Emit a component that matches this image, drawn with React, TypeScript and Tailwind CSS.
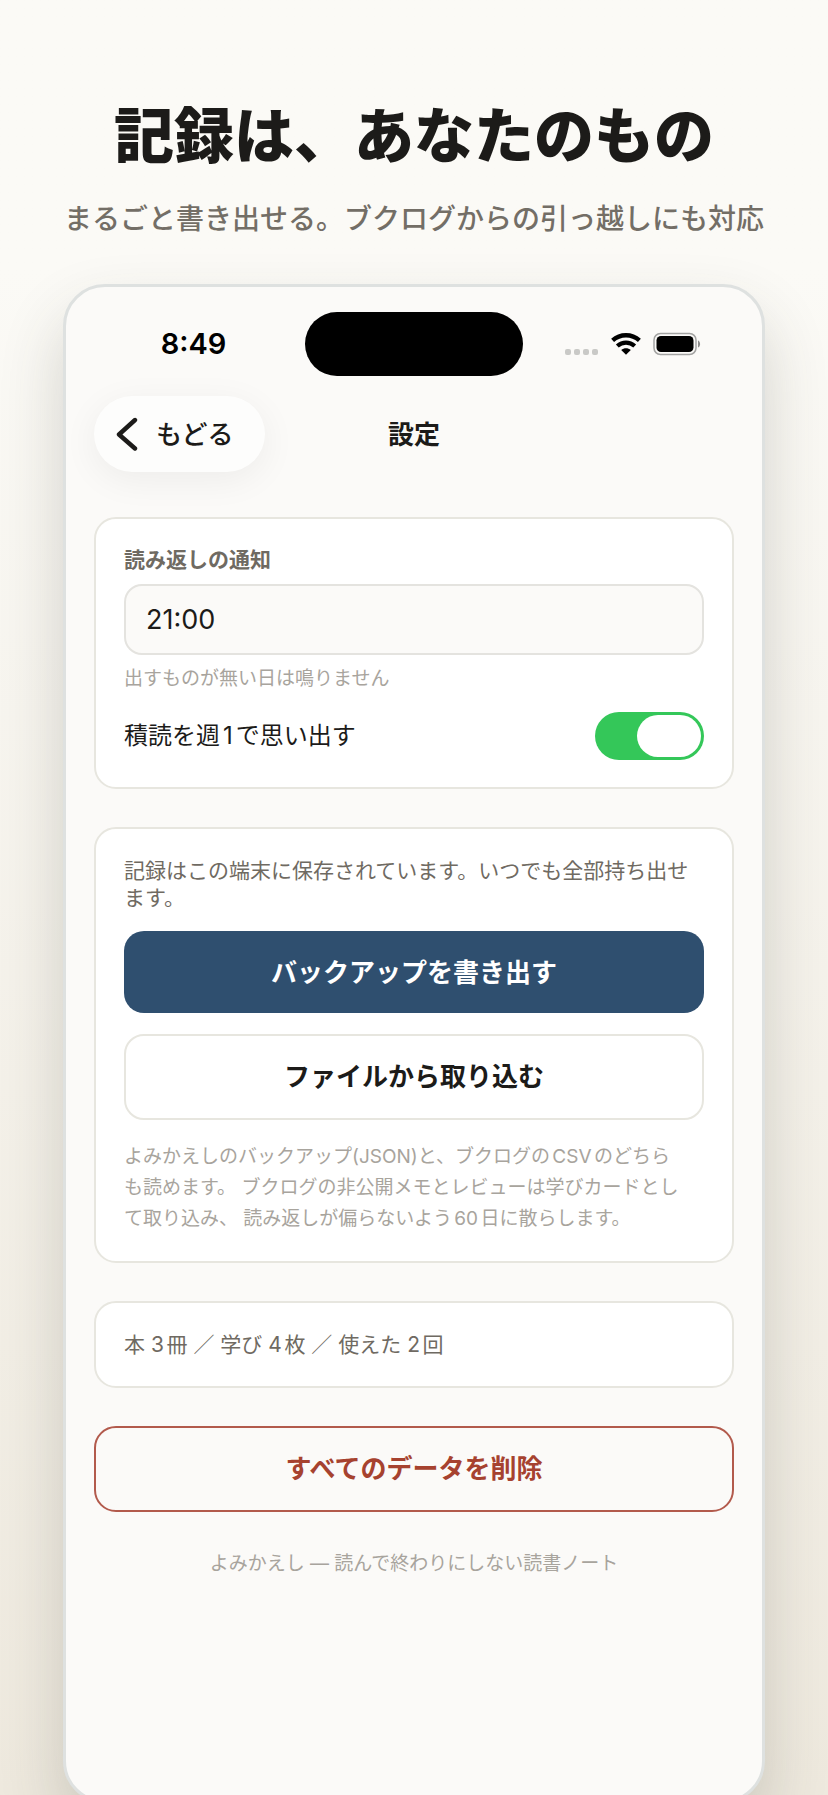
import React from "react";

function CellularDots() {
  return (
    <div className="flex gap-[3px] pt-4" aria-hidden="true">
      {[0, 1, 2, 3].map((dot) => (
        <span key={dot} className="size-1.5 rounded-xs bg-[#c9c9c7]" />
      ))}
    </div>
  );
}

function WifiIcon() {
  return (
    <svg width="30" height="22" viewBox="0 0 30 22" fill="none" aria-hidden="true">
      <path d="M1.6 7.4C9.2 0.6 20.8 0.6 28.4 7.4" stroke="#000" strokeWidth="4.4" />
      <path d="M6.3 13C11.4 8.4 18.6 8.4 23.7 13" stroke="#000" strokeWidth="4.2" />
      <path d="M10.2 17C13 14.8 17 14.8 19.8 17L15 21.8Z" fill="#000" />
    </svg>
  );
}

function BatteryIcon() {
  return (
    <svg width="48" height="24" viewBox="0 0 48 24" fill="none" aria-hidden="true">
      <rect x="1" y="1.5" width="42" height="21" rx="6.5" stroke="#a3a3a2" strokeWidth="1.5" />
      <rect x="3.5" y="4" width="37" height="16" rx="4.5" fill="#000" />
      <path d="M45 8.5C47.8 9.5 47.8 14.5 45 15.5Z" fill="#8d8d8c" />
    </svg>
  );
}

function StatusBar() {
  return (
    <div className="grid grid-cols-[1fr_218px_1fr] items-center px-6">
      <p className="pr-2 text-center text-[29px]/[32px] font-semibold text-black">8:49</p>
      <div className="h-16 rounded-full bg-black" />
      <div className="flex items-center pl-[42px]">
        <CellularDots />
        <span className="w-[13px]" />
        <WifiIcon />
        <span className="w-3" />
        <BatteryIcon />
      </div>
    </div>
  );
}

function NavBar() {
  return (
    <div className="mt-5 grid grid-cols-[1fr_auto_1fr] items-center px-7">
      <button
        type="button"
        className="flex h-[76px] items-center justify-self-start rounded-full bg-[#fdfdfc] pr-8 pl-[22px] text-[26px]/[32px] font-medium text-[#1c1b19] shadow-[0_8px_36px_rgba(0,0,0,0.06)]"
      >
        <svg width="22" height="34" viewBox="0 0 22 34" fill="none" aria-hidden="true">
          <path
            d="M19 3L3 17.5L19 31.5"
            stroke="#1c1b19"
            strokeWidth="4.4"
            strokeLinecap="round"
            strokeLinejoin="round"
          />
        </svg>
        <span className="pt-0.5 pl-[18px]">もどる</span>
      </button>
      <h2 className="pt-0.5 text-[26px]/[32px] font-bold text-[#1c1b19]">設定</h2>
      <span />
    </div>
  );
}

function Card({ children, className = "" }: { children: React.ReactNode; className?: string }) {
  return (
    <section className={`rounded-[22px] border-2 border-[#e7e6df] bg-white px-7 ${className}`}>
      {children}
    </section>
  );
}

function ReminderCard() {
  return (
    <Card className="pt-[27px] pb-[27px]">
      <label htmlFor="reminder-time" className="block text-[21px]/[28px] font-bold text-[#6f6a62]">
        読み返しの通知
      </label>
      <input
        id="reminder-time"
        type="text"
        defaultValue="21:00"
        className="mt-2.5 block h-[71px] w-full rounded-[18px] border-2 border-[#e4e3df] bg-[#fbfaf8] px-5 text-[27px]/[32px] text-[#1c1b19]"
      />
      <p className="mt-2.5 text-[19px]/[28px] text-[#a8a49d]">出すものが無い日は鳴りません</p>
      <div className="mt-[19px] flex items-center justify-between">
        <label htmlFor="weekly" className="text-[24px]/[32px] text-[#1c1b19]">
          積読を週1で思い出す
        </label>
        <input
          id="weekly"
          type="checkbox"
          role="switch"
          defaultChecked
          className="flex h-12 w-[109px] appearance-none items-center rounded-full bg-[#b8b8b4] p-[3px] before:h-[42px] before:w-16 before:rounded-full before:bg-white checked:justify-end checked:bg-[#34c759]"
        />
      </div>
    </Card>
  );
}

function BackupCard() {
  return (
    <Card className="pt-7 pb-[27px]">
      <p className="text-[21px]/[27px] text-[#6f6a62]">
        記録はこの端末に保存されています。いつでも全部持ち出せます。
      </p>
      <button
        type="button"
        className="mt-5 block h-[82px] w-full rounded-[20px] bg-[#2f4f6f] pt-0.5 text-[26px]/[32px] font-bold text-white"
      >
        バックアップを書き出す
      </button>
      <button
        type="button"
        className="mt-[21px] block h-[86px] w-full rounded-[20px] border-2 border-[#e7e6df] bg-white text-[26px]/[32px] font-bold text-[#1c1b19]"
      >
        ファイルから取り込む
      </button>
      <p className="mt-[21px] text-[19px]/[31px] text-[#a8a49d]">
        よみかえしのバックアップ(JSON)と、ブクログのCSVのどちら
        <br />
        も読めます。 ブクログの非公開メモとレビューは学びカードとし
        <br />
        て取り込み、 読み返しが偏らないよう60日に散らします。
      </p>
    </Card>
  );
}

export default function App() {
  return (
    <main className="h-screen overflow-hidden bg-linear-to-b from-[#fbfaf6] from-15% to-[#eee9de] px-[63px] pt-[100px] font-['Inter','Noto_Sans_CJK_JP',sans-serif] [text-autospace:normal]">
      <header className="text-center whitespace-nowrap">
        <h1 className="text-[60px]/[72px] font-black text-[#1c1b19]">記録は、あなたのもの</h1>
        <p className="-mx-4 mt-[27px] text-[28px]/[40px] font-medium text-[#736e66]">
          まるごと書き出せる。ブクログからの引っ越しにも対応
        </p>
      </header>

      <div className="mt-[45px] min-h-[1519px] rounded-[42px] border-[3px] border-[#dee1e0] bg-[#fbfaf8] pt-[25px] shadow-[0_32px_64px_rgba(60,60,50,0.2)]">
        <StatusBar />
        <NavBar />
        <div className="mt-[45px] flex flex-col gap-[38px] px-7">
          <ReminderCard />
          <BackupCard />
          <Card className="py-7">
            <p className="text-[21px]/[27px] text-[#6f6a62]">本 3冊 ／ 学び 4枚 ／ 使えた 2回</p>
          </Card>
          <button
            type="button"
            className="h-[86px] w-full rounded-[22px] border-2 border-[#b25a4c] text-[26px]/[32px] font-bold text-[#a6422f]"
          >
            すべてのデータを削除
          </button>
          <p className="text-center text-[19px]/[28px] text-[#a8a49d]">
            よみかえし — 読んで終わりにしない読書ノート
          </p>
        </div>
      </div>
    </main>
  );
}
